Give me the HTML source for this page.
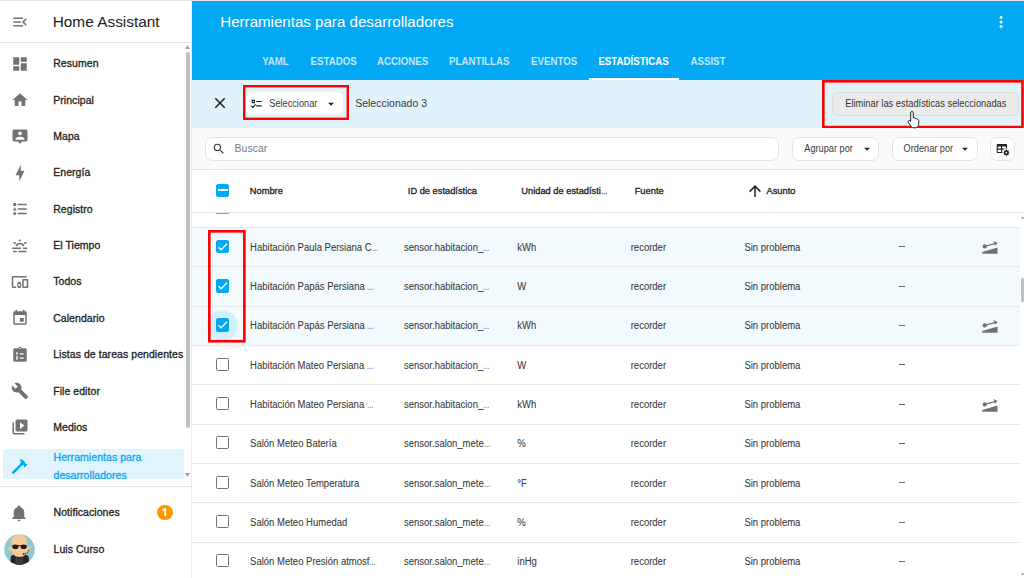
<!DOCTYPE html>
<html><head><meta charset="utf-8"><title>Home Assistant</title>
<style>
*{box-sizing:border-box;margin:0;padding:0}
html,body{width:1024px;height:578px;overflow:hidden;background:#fff;font-family:"Liberation Sans",sans-serif;color:#212121}
.a{position:absolute}
.t{position:absolute;white-space:nowrap;line-height:1}
svg{position:absolute;display:block}
.red{position:absolute;border:2.5px solid #f4000a}
.row{position:absolute;width:828px;height:39.33px;border-top:1px solid #e8e8e8}
.row.sel{background:#f3fafe}
.cb{position:absolute;width:13.2px;height:13px;border:1.6px solid #727272;border-radius:1.5px}
.cb.on{background:#03a9f4;border-color:#03a9f4;width:13.5px;height:13.5px;border-radius:2px}
</style></head><body>
<div class="a" style="left:0.00px;top:0.00px;width:1024.00px;height:1.00px;background:#dfe4e8;"></div>
<div class="a" style="left:191.00px;top:1.00px;width:1.00px;height:577.00px;background:#ececec;"></div>
<svg style="left:10.60px;top:12.60px;" width="18" height="18" viewBox="0 0 24 24"><path fill="#727272" fill-rule="evenodd" d="M21,15.61L19.59,17L14.58,12L19.59,7L21,8.39L17.44,12L21,15.61M3,6H16V8H3V6M3,13V11H13V13H3M3,18V16H16V18H3Z"/></svg>
<div class="t" style="left:52.70px;top:14.21px;font-size:15.4px;color:#212121;">Home Assistant</div>
<div class="a" style="left:0.00px;top:42.00px;width:191.00px;height:1.00px;background:#e4e4e4;"></div>
<div class="a" style="left:0;top:43px;width:184.5px;height:436px;overflow:hidden">
<svg style="left:10.80px;top:11.90px;" width="18" height="18" viewBox="0 0 24 24"><path fill="#727272" fill-rule="evenodd" d="M13,3V9H21V3M13,21H21V11H13M3,21H11V15H3M3,13H11V3H3V13Z"/></svg>
<div class="t" style="left:53.20px;top:15.37px;font-size:10.5px;color:#212121;-webkit-text-stroke:0.3px #212121;letter-spacing:0.06px;">Resumen</div>
<svg style="left:10.80px;top:48.25px;" width="18" height="18" viewBox="0 0 24 24"><path fill="#727272" fill-rule="evenodd" d="M10,20V14H14V20H19V12H22L12,3L2,12H5V20H10Z"/></svg>
<div class="t" style="left:53.20px;top:51.73px;font-size:10.5px;color:#212121;-webkit-text-stroke:0.3px #212121;letter-spacing:0.06px;">Principal</div>
<svg style="left:10.80px;top:84.60px;" width="18" height="18" viewBox="0 0 24 24"><path fill="#727272" fill-rule="evenodd" d="M4,2H20A2,2 0 0,1 22,4V16A2,2 0 0,1 20,18H15L12,21L9,18H4A2,2 0 0,1 2,16V4A2,2 0 0,1 4,2M12,4.5A2.5,2.5 0 0,0 9.5,7A2.5,2.5 0 0,0 12,9.5A2.5,2.5 0 0,0 14.5,7A2.5,2.5 0 0,0 12,4.5M6,15.5H18V14.5C18,12.5 14,11.5 12,11.5C10,11.5 6,12.5 6,14.5V15.5Z"/></svg>
<div class="t" style="left:53.20px;top:88.08px;font-size:10.5px;color:#212121;-webkit-text-stroke:0.3px #212121;letter-spacing:0.06px;">Mapa</div>
<svg style="left:10.80px;top:120.95px;" width="18" height="18" viewBox="0 0 24 24"><path fill="#727272" fill-rule="evenodd" d="M11,15H6L13,1V9H18L11,23V15Z"/></svg>
<div class="t" style="left:53.20px;top:124.43px;font-size:10.5px;color:#212121;-webkit-text-stroke:0.3px #212121;letter-spacing:0.06px;">Energía</div>
<svg style="left:10.80px;top:157.30px;" width="18" height="18" viewBox="0 0 24 24"><path fill="#727272" fill-rule="evenodd" d="M5,9.5L7.5,14H2.5L5,9.5M3,4H7V8H3V4M5,20A2,2 0 0,0 7,18A2,2 0 0,0 5,16A2,2 0 0,0 3,18A2,2 0 0,0 5,20M9,5V7H21V5H9M9,19H21V17H9V19M9,13H21V11H9V13Z"/></svg>
<div class="t" style="left:53.20px;top:160.77px;font-size:10.5px;color:#212121;-webkit-text-stroke:0.3px #212121;letter-spacing:0.06px;">Registro</div>
<svg style="left:10.80px;top:193.65px;" width="18" height="18" viewBox="0 0 24 24"><path fill="#727272" fill-rule="evenodd" d="M1.6,14.1H13.3V16.1H1.6Z M16.1,14.1H21.7V16.1H16.1Z M2.7,18.3H7.5V20.3H2.7Z M9.9,18.3H20.7V20.3H9.9Z M6.3,12.4A5.65,4.9 0 0,1 17.6,12.4H15.5A3.55,2.8 0 0,0 8.4,12.4Z M11.6,2.5L13.5,5.5H9.7Z M2.4,6.7L7.1,7.3L5.1,10.2Z M21.5,6.7L16.8,7.3L18.8,10.2Z"/></svg>
<div class="t" style="left:53.20px;top:197.12px;font-size:10.5px;color:#212121;-webkit-text-stroke:0.3px #212121;letter-spacing:0.06px;">El Tiempo</div>
<svg style="left:10.80px;top:230.00px;" width="18" height="18" viewBox="0 0 24 24"><path fill="#727272" fill-rule="evenodd" d="M3,6H21V4H3C1.9,4 1,4.9 1,6V18A2,2 0 0,0 3,20H7V18H3V6M13,12H9V13.78C8.39,14.33 8,15.11 8,16C8,16.89 8.39,17.67 9,18.22V20H13V18.22C13.61,17.67 14,16.88 14,16C14,15.12 13.61,14.33 13,13.78V12M11,17.5A1.5,1.5 0 0,1 9.5,16A1.5,1.5 0 0,1 11,14.5A1.5,1.5 0 0,1 12.5,16A1.5,1.5 0 0,1 11,17.5M22,8H16A1,1 0 0,0 15,9V19A1,1 0 0,0 16,20H22A1,1 0 0,0 23,19V9A1,1 0 0,0 22,8M21,18H17V10H21V18Z"/></svg>
<div class="t" style="left:53.20px;top:233.48px;font-size:10.5px;color:#212121;-webkit-text-stroke:0.3px #212121;letter-spacing:0.06px;">Todos</div>
<svg style="left:10.80px;top:266.35px;" width="18" height="18" viewBox="0 0 24 24"><path fill="#727272" fill-rule="evenodd" d="M19,19H5V8H19M16,1V3H8V1H6V3H5C3.89,3 3,3.89 3,5V19A2,2 0 0,0 5,21H19A2,2 0 0,0 21,19V5C21,3.89 20.1,3 19,3H18V1M17,12H12V17H17V12Z"/></svg>
<div class="t" style="left:53.20px;top:269.82px;font-size:10.5px;color:#212121;-webkit-text-stroke:0.3px #212121;letter-spacing:0.06px;">Calendario</div>
<svg style="left:10.80px;top:302.70px;" width="18" height="18" viewBox="0 0 24 24"><path fill="#727272" fill-rule="evenodd" d="M5,3H9.2A2.9,2.9 0 0,1 14.8,3H19A2,2 0 0,1 21,5V19A2,2 0 0,1 19,21H5A2,2 0 0,1 3,19V5A2,2 0 0,1 5,3Z M12,2.3A1,1 0 1,0 12,4.3A1,1 0 1,0 12,2.3Z M7,8.2H8.9V11.6H7Z M11.6,9.5H16.8V11.3H11.6Z M7,13.4H8.9V18.2H7Z M11.6,15.2H16.8V17H11.6Z"/></svg>
<div class="t" style="left:53.20px;top:306.18px;font-size:10.5px;color:#212121;-webkit-text-stroke:0.3px #212121;letter-spacing:0.06px;">Listas de tareas pendientes</div>
<svg style="left:10.80px;top:339.05px;" width="18" height="18" viewBox="0 0 24 24"><path fill="#727272" fill-rule="evenodd" d="M22.7,19L13.6,9.9C14.5,7.6 14,4.9 12.1,3C10.1,1 7.1,0.6 4.7,1.7L9,6L6,9L1.6,4.7C0.4,7.1 0.9,10.1 2.9,12.1C4.8,14 7.5,14.5 9.8,13.6L18.9,22.7C19.3,23.1 19.9,23.1 20.3,22.7L22.6,20.4C23.1,20 23.1,19.3 22.7,19Z"/></svg>
<div class="t" style="left:53.20px;top:342.53px;font-size:10.5px;color:#212121;-webkit-text-stroke:0.3px #212121;letter-spacing:0.06px;">File editor</div>
<svg style="left:10.80px;top:375.40px;" width="18" height="18" viewBox="0 0 24 24"><path fill="#727272" fill-rule="evenodd" d="M4,6H2V20A2,2 0 0,0 4,22H18V20H4V6M20,2H8A2,2 0 0,0 6,4V16A2,2 0 0,0 8,18H20A2,2 0 0,0 22,16V4A2,2 0 0,0 20,2M12,14.5V5.5L18,10L12,14.5Z"/></svg>
<div class="t" style="left:53.20px;top:378.88px;font-size:10.5px;color:#212121;-webkit-text-stroke:0.3px #212121;letter-spacing:0.06px;">Medios</div>
<div class="a" style="left:3.00px;top:405.80px;width:181.00px;height:40.00px;background:#e1f3fc;border-radius:3px"></div>
<svg style="left:10.10px;top:413.80px;" width="19" height="19" viewBox="0 0 24 24"><path fill="#03a9f4" fill-rule="evenodd" d="M2,19.63L13.43,8.2L12.72,7.5L14.14,6.07L12,3.89C13.2,2.7 15.09,2.7 16.27,3.89L19.87,7.5L18.45,8.91H21.29L22,9.62L18.45,13.21L17.74,12.5V9.62L16.27,11.04L15.56,10.33L4.13,21.76L2,19.63Z"/></svg>
<div class="t" style="left:53.50px;top:408.88px;font-size:10.5px;color:#03a9f4;-webkit-text-stroke:0.3px #03a9f4;letter-spacing:0.06px;">Herramientas para</div>
<div class="t" style="left:53.50px;top:426.68px;font-size:10.5px;color:#03a9f4;-webkit-text-stroke:0.3px #03a9f4;letter-spacing:0.06px;">desarrolladores</div>
</div>
<div class="a" style="left:185.50px;top:52.00px;width:4.70px;height:375.70px;background:#c1c1c1;border-radius:2.4px"></div>
<svg style="left:185px;top:45px" width="5" height="4" viewBox="0 0 5 4"><path fill="#a3a3a3" d="M2.5,0L5,4H0Z"/></svg>
<svg style="left:185px;top:473px" width="5" height="4" viewBox="0 0 5 4"><path fill="#a3a3a3" d="M0,0H5L2.5,4Z"/></svg>
<div class="a" style="left:0.00px;top:486.00px;width:191.00px;height:1.00px;background:#e4e4e4;"></div>
<svg style="left:10.10px;top:503.80px;" width="18" height="18" viewBox="0 0 24 24"><path fill="#727272" fill-rule="evenodd" d="M21,19V20H3V19L5,17V11C5,7.9 7.03,5.17 10,4.29C10,4.19 10,4.1 10,4A2,2 0 0,1 12,2A2,2 0 0,1 14,4C14,4.1 14,4.19 14,4.29C16.97,5.17 19,7.9 19,11V17L21,19M14,21A2,2 0 0,1 12,23A2,2 0 0,1 10,21"/></svg>
<div class="t" style="left:53.50px;top:507.07px;font-size:10.5px;color:#212121;-webkit-text-stroke:0.3px #212121;letter-spacing:0.06px;">Notificaciones</div>
<div class="a" style="left:157.30px;top:504.90px;width:15.40px;height:15.40px;background:#ff9800;border-radius:50%"></div>
<svg style="left:160px;top:506px" width="10" height="12" viewBox="160 506 10 12"><path fill="#fff" d="M164.3,508.3H166.2V516.1H164.3V510.6L162.4,511.2V509.7Z"/></svg>
<svg style="left:4px;top:533.5px" width="31" height="31" viewBox="0 0 31 31">
<defs><clipPath id="cc"><circle cx="15.5" cy="15.5" r="15.3"/></clipPath></defs>
<circle cx="15.5" cy="15.5" r="15.3" fill="#92c9cc"/>
<g clip-path="url(#cc)">
<path fill="#262626" d="M7,22L11,20H20L24.5,22L25.5,32H6Z"/>
<path fill="#3a3a3a" d="M11,21L15.5,25L20,21L19,31H12Z"/>
<ellipse cx="6.2" cy="15" rx="1.6" ry="2" fill="#f5c594"/>
<ellipse cx="24.8" cy="15" rx="1.6" ry="2" fill="#f5c594"/>
<path fill="#f7c898" d="M7.6,9C7.6,3.6 11,0.8 15.5,0.8C20,0.8 23.4,3.6 23.4,9V16C23.4,20 20,23 15.5,23C11,23 7.6,20 7.6,16Z"/>
<ellipse cx="11.4" cy="12.8" rx="3.1" ry="2.3" fill="#1c1c1c"/>
<ellipse cx="19.6" cy="12.8" rx="3.1" ry="2.3" fill="#1c1c1c"/>
<path stroke="#1c1c1c" stroke-width="0.8" d="M8,11.6H23"/>
<path stroke="#333" stroke-width="0.7" fill="none" d="M25,15.5C25,18 23,19.5 20,19.8"/>
<circle cx="19.6" cy="19.8" r="0.9" fill="#222"/>
</g></svg>
<div class="t" style="left:53.50px;top:543.58px;font-size:10.5px;color:#212121;-webkit-text-stroke:0.3px #212121;letter-spacing:0.06px;">Luis Curso</div>
<div class="a" style="left:192.00px;top:1.00px;width:832.00px;height:78.60px;background:#03a9f4;"></div>
<div class="t" style="left:220.30px;top:14.47px;font-size:15.1px;color:#fff;">Herramientas para desarrolladores</div>
<svg style="left:991.60px;top:13.00px;" width="18" height="18" viewBox="0 0 24 24"><path fill="#fff" fill-rule="evenodd" d="M12,16A2,2 0 0,1 14,18A2,2 0 0,1 12,20A2,2 0 0,1 10,18A2,2 0 0,1 12,16M12,10A2,2 0 0,1 14,12A2,2 0 0,1 12,14A2,2 0 0,1 10,12A2,2 0 0,1 12,10M12,4A2,2 0 0,1 14,6A2,2 0 0,1 12,8A2,2 0 0,1 10,6A2,2 0 0,1 12,4Z"/></svg>
<div class="t" style="left:262.20px;top:56.76px;font-size:9.7px;color:rgba(255,255,255,0.75);font-weight:700;transform:scaleY(1.16);transform-origin:0 8.24px;">YAML</div>
<div class="t" style="left:310.60px;top:56.76px;font-size:9.7px;color:rgba(255,255,255,0.75);font-weight:700;transform:scaleY(1.16);transform-origin:0 8.24px;">ESTADOS</div>
<div class="t" style="left:377.10px;top:56.76px;font-size:9.7px;color:rgba(255,255,255,0.75);font-weight:700;transform:scaleY(1.16);transform-origin:0 8.24px;">ACCIONES</div>
<div class="t" style="left:449.10px;top:56.76px;font-size:9.7px;color:rgba(255,255,255,0.75);font-weight:700;transform:scaleY(1.16);transform-origin:0 8.24px;">PLANTILLAS</div>
<div class="t" style="left:531.10px;top:56.76px;font-size:9.7px;color:rgba(255,255,255,0.75);font-weight:700;transform:scaleY(1.16);transform-origin:0 8.24px;">EVENTOS</div>
<div class="t" style="left:598.40px;top:56.76px;font-size:9.7px;color:#fff;font-weight:700;transform:scaleY(1.16);transform-origin:0 8.24px;">ESTADÍSTICAS</div>
<div class="t" style="left:690.50px;top:56.76px;font-size:9.7px;color:rgba(255,255,255,0.75);font-weight:700;transform:scaleY(1.16);transform-origin:0 8.24px;">ASSIST</div>
<div class="a" style="left:588.60px;top:77.80px;width:90.20px;height:1.80px;background:#fff;"></div>
<div class="a" style="left:192.00px;top:79.60px;width:832.00px;height:48.40px;background:#e1f2fb;"></div>
<svg style="left:210.80px;top:94.40px;" width="18" height="18" viewBox="0 0 24 24"><path fill="#212121" fill-rule="evenodd" d="M19,6.41L17.59,5L12,10.59L6.41,5L5,6.41L10.59,12L5,17.59L6.41,19L12,13.41L17.59,19L19,17.59L13.41,12L19,6.41Z"/></svg>
<div class="a" style="left:245.20px;top:91.30px;width:98.40px;height:24.20px;background:#fff;border-radius:7px;border:1px solid #eef1f3"></div>
<svg style="left:249.90px;top:96.70px;" width="13.4" height="13.4" viewBox="0 0 24 24"><path fill="#212121" fill-rule="evenodd" d="M3,5H9V11H3V5M5,7V9H7V7H5M11,7H21V9H11V7M11,15H21V17H11V15M5,20L1.5,16.5L2.91,15.09L5,17.17L9.59,12.59L11,14L5,20Z"/></svg>
<div class="t" style="left:269.30px;top:99.98px;font-size:9.2px;color:#3a3a3a;transform:scaleY(1.1);transform-origin:0 7.82px;">Seleccionar</div>
<svg style="left:324.00px;top:96.50px;" width="14" height="14" viewBox="0 0 24 24"><path fill="#212121" fill-rule="evenodd" d="M7,10L12,15L17,10H7Z"/></svg>
<div class="t" style="left:355.20px;top:97.88px;font-size:10.5px;color:#3a3a3a;transform:scaleY(1.07);transform-origin:0 8.92px;">Seleccionado 3</div>
<svg style="left:242px;top:84px" width="108.00" height="37.00" viewBox="242 84 108.00 37.00"><rect x="244.20" y="86.20" width="103.60" height="32.60" fill="none" stroke="#fd0000" stroke-width="2.4"/></svg>
<div class="a" style="left:832.40px;top:91.50px;width:186.60px;height:24.20px;background:#ebebeb;border-radius:6.5px;border:1px solid #dadada"></div>
<div class="t" style="left:845.20px;top:100.00px;font-size:9.3px;color:#333;transform:scaleY(1.12);transform-origin:0 7.91px;">Eliminar las estadísticas seleccionadas</div>
<svg style="left:821px;top:79.3px" width="203.80" height="50.40" viewBox="821 79.3 203.80 50.40"><rect x="823.30" y="81.60" width="199.20" height="45.80" fill="none" stroke="#fd0000" stroke-width="2.6"/></svg>
<div class="a" style="left:192.00px;top:128.00px;width:832.00px;height:41.00px;background:#fafafa;"></div>
<div class="a" style="left:204.50px;top:137.30px;width:574.80px;height:23.90px;background:#fff;border-radius:7px;border:1px solid #e3e3e3"></div>
<svg style="left:212.30px;top:142.40px;" width="13.7" height="13.7" viewBox="0 0 24 24"><path fill="#3c3c3c" fill-rule="evenodd" d="M9.5,3A6.5,6.5 0 0,1 16,9.5C16,11.11 15.41,12.59 14.44,13.73L14.71,14H15.5L20.5,19L19,20.5L14,15.5V14.71L13.73,14.44C12.59,15.41 11.11,16 9.5,16A6.5,6.5 0 0,1 3,9.5A6.5,6.5 0 0,1 9.5,3M9.5,5C7,5 5,7 5,9.5C5,12 7,14 9.5,14C12,14 14,12 14,9.5C14,7 12,5 9.5,5Z"/></svg>
<div class="t" style="left:234.60px;top:143.07px;font-size:10.5px;color:#7a7a7a;transform:scaleY(1.05);transform-origin:0 8.92px;">Buscar</div>
<div class="a" style="left:792.40px;top:137.30px;width:86.80px;height:23.90px;background:#fff;border-radius:7px;border:1px solid #e3e3e3"></div>
<div class="t" style="left:804.30px;top:144.78px;font-size:9.2px;color:#3a3a3a;transform:scaleY(1.1);transform-origin:0 7.82px;">Agrupar por</div>
<svg style="left:859.70px;top:141.50px;" width="14" height="14" viewBox="0 0 24 24"><path fill="#212121" fill-rule="evenodd" d="M7,10L12,15L17,10H7Z"/></svg>
<div class="a" style="left:891.70px;top:137.30px;width:85.90px;height:23.90px;background:#fff;border-radius:7px;border:1px solid #e3e3e3"></div>
<div class="t" style="left:903.60px;top:144.78px;font-size:9.2px;color:#3a3a3a;transform:scaleY(1.1);transform-origin:0 7.82px;">Ordenar por</div>
<svg style="left:958.20px;top:141.50px;" width="14" height="14" viewBox="0 0 24 24"><path fill="#212121" fill-rule="evenodd" d="M7,10L12,15L17,10H7Z"/></svg>
<div class="a" style="left:990.20px;top:137.30px;width:25.20px;height:23.90px;background:#fff;border-radius:7px;border:1px solid #e3e3e3"></div>
<svg style="left:995px;top:142px" width="15" height="15" viewBox="995 142 15 15"><path fill="#212121" fill-rule="evenodd" d="M997.7,144H1006.1A1,1 0 0,1 1007.1,145V153H997.7A1,1 0 0,1 996.7,152V145A1,1 0 0,1 997.7,144Z M997.8,146.6H1001.1V148.6H997.8Z M1002.2,146.6H1006V148.6H1002.2Z M997.8,149.7H1001.1V151.9H997.8Z M1002.2,149.7H1006V151.9H1002.2Z"/><circle cx="1006.4" cy="152.5" r="3.9" fill="#fff"/><g transform="translate(1006.4,152.3) scale(0.82)"><path fill="#212121" d="M-0.6,-3.3H0.6L0.8,-2.5L1.6,-2.1L2.3,-2.5L3.1,-1.7L2.7,-1L3,-0.2L3.5,0.1V1.2L2.7,1.4L2.4,2.1L2.8,2.8L2,3.6L1.3,3.2L0.6,3.5L0.5,4.1H-0.6L-0.8,3.4L-1.5,3.1L-2.2,3.5L-3,2.7L-2.6,2L-2.9,1.3L-3.5,1.1V0L-2.9,-0.2L-2.6,-0.9L-3,-1.6L-2.2,-2.4L-1.5,-2L-0.8,-2.4Z M0,-0.8A1.1,1.1 0 1,0 0,1.4A1.1,1.1 0 1,0 0,-0.8Z" fill-rule="evenodd"/></g></svg>
<div class="a" style="left:192.00px;top:169.00px;width:832.00px;height:1.00px;background:#e6e6e6;"></div>
<div class="a" style="left:192.00px;top:170.00px;width:832.00px;height:42.00px;background:#fff;"></div>
<div class="cb on" style="left:215.75px;top:183.75px"></div>
<div class="a" style="left:218.00px;top:189.40px;width:9.50px;height:2.00px;background:#fff;"></div>
<div class="t" style="left:249.80px;top:186.59px;font-size:9.3px;color:#212121;-webkit-text-stroke:0.3px #212121;transform:scaleY(1.04);transform-origin:0 7.91px;">Nombre</div>
<div class="t" style="left:407.80px;top:186.59px;font-size:9.3px;color:#212121;-webkit-text-stroke:0.3px #212121;transform:scaleY(1.04);transform-origin:0 7.91px;">ID de estadística</div>
<div class="t" style="left:521.30px;top:186.59px;font-size:9.3px;color:#212121;-webkit-text-stroke:0.3px #212121;transform:scaleY(1.04);transform-origin:0 7.91px;">Unidad de estadísti<span style="display:inline-block;transform:scaleX(0.68);transform-origin:0 0;opacity:0.8">…</span></div>
<div class="t" style="left:634.70px;top:186.59px;font-size:9.3px;color:#212121;-webkit-text-stroke:0.3px #212121;transform:scaleY(1.04);transform-origin:0 7.91px;">Fuente</div>
<div class="t" style="left:766.50px;top:186.59px;font-size:9.3px;color:#212121;-webkit-text-stroke:0.3px #212121;transform:scaleY(1.04);transform-origin:0 7.91px;">Asunto</div>
<svg style="left:745.50px;top:182.00px;" width="18" height="18" viewBox="0 0 24 24"><path fill="#212121" fill-rule="evenodd" d="M13,20H11V8L5.5,13.5L4.08,12.08L12,4.16L19.92,12.08L18.5,13.5L13,8V20Z"/></svg>
<div class="a" style="left:192.00px;top:212.00px;width:832.00px;height:1.00px;background:#e6e6e6;"></div>
<div class="a" style="left:192px;top:213px;width:832px;height:365px;overflow:hidden">
<div class="a" style="left:23.75px;top:0.20px;width:13.50px;height:1.10px;background:#9a9a9a;"></div>
<div class="row sel" style="left:0;top:13.90px"></div>
<div class="cb on" style="left:23.60px;top:26.75px"></div>
<svg style="left:23.60px;top:26.75px" width="13.5" height="13.5" viewBox="0 0 24 24"><path fill="none" stroke="#fff" stroke-width="2.3" d="M4.6,13L9,17.4L19.6,6.8"/></svg>
<div class="t" style="left:58.10px;top:29.63px;font-size:9.5px;color:#383838;-webkit-text-stroke:0.06px #383838;transform:scaleY(1.12);transform-origin:0 8.07px;">Habitación Paula Persiana C<span style="display:inline-block;transform:scaleX(0.68);transform-origin:0 0;opacity:0.8">…</span></div>
<div class="t" style="left:212.00px;top:29.63px;font-size:9.5px;color:#383838;-webkit-text-stroke:0.06px #383838;transform:scaleY(1.12);transform-origin:0 8.07px;">sensor.habitacion_<span style="display:inline-block;transform:scaleX(0.68);transform-origin:0 0;opacity:0.8">…</span></div>
<div class="t" style="left:325.30px;top:29.63px;font-size:9.5px;color:#383838;-webkit-text-stroke:0.06px #383838;transform:scaleY(1.12);transform-origin:0 8.07px;">kWh</div>
<div class="t" style="left:438.70px;top:29.63px;font-size:9.5px;color:#383838;-webkit-text-stroke:0.06px #383838;transform:scaleY(1.12);transform-origin:0 8.07px;">recorder</div>
<div class="t" style="left:552.40px;top:29.63px;font-size:9.5px;color:#383838;-webkit-text-stroke:0.06px #383838;transform:scaleY(1.12);transform-origin:0 8.07px;">Sin problema</div>
<div class="a" style="left:706.70px;top:33.00px;width:6.30px;height:1.00px;background:#666;"></div>
<svg style="left:790.00px;top:28.40px" width="16" height="14" viewBox="0 0 16 14"><path fill="#707070" d="M0.2,11L15.5,6.4V12.8H0.2Z"/><circle cx="2.7" cy="5.4" r="2.1" fill="#707070"/><path fill="none" stroke="#707070" stroke-width="1.3" d="M2.7,5.4L12.8,2.6"/><path fill="#707070" d="M15.7,1.9L11.5,0.1L12.9,4.7Z"/></svg>
<div class="row sel" style="left:0;top:53.23px"></div>
<div class="cb on" style="left:23.60px;top:66.08px"></div>
<svg style="left:23.60px;top:66.08px" width="13.5" height="13.5" viewBox="0 0 24 24"><path fill="none" stroke="#fff" stroke-width="2.3" d="M4.6,13L9,17.4L19.6,6.8"/></svg>
<div class="t" style="left:58.10px;top:68.96px;font-size:9.5px;color:#383838;-webkit-text-stroke:0.06px #383838;transform:scaleY(1.12);transform-origin:0 8.07px;">Habitación Papás Persiana <span style="display:inline-block;transform:scaleX(0.68);transform-origin:0 0;opacity:0.8">…</span></div>
<div class="t" style="left:212.00px;top:68.96px;font-size:9.5px;color:#383838;-webkit-text-stroke:0.06px #383838;transform:scaleY(1.12);transform-origin:0 8.07px;">sensor.habitacion_<span style="display:inline-block;transform:scaleX(0.68);transform-origin:0 0;opacity:0.8">…</span></div>
<div class="t" style="left:325.30px;top:68.96px;font-size:9.5px;color:#383838;-webkit-text-stroke:0.06px #383838;transform:scaleY(1.12);transform-origin:0 8.07px;">W</div>
<div class="t" style="left:438.70px;top:68.96px;font-size:9.5px;color:#383838;-webkit-text-stroke:0.06px #383838;transform:scaleY(1.12);transform-origin:0 8.07px;">recorder</div>
<div class="t" style="left:552.40px;top:68.96px;font-size:9.5px;color:#383838;-webkit-text-stroke:0.06px #383838;transform:scaleY(1.12);transform-origin:0 8.07px;">Sin problema</div>
<div class="a" style="left:706.70px;top:73.00px;width:6.30px;height:1.00px;background:#666;"></div>
<div class="row sel" style="left:0;top:92.56px"></div>
<div class="a" style="left:14.60px;top:96.50px;width:31.40px;height:31.40px;background:rgba(3,169,244,0.12);border-radius:50%"></div>
<div class="cb on" style="left:23.60px;top:105.41px"></div>
<svg style="left:23.60px;top:105.41px" width="13.5" height="13.5" viewBox="0 0 24 24"><path fill="none" stroke="#fff" stroke-width="2.3" d="M4.6,13L9,17.4L19.6,6.8"/></svg>
<div class="t" style="left:58.10px;top:108.29px;font-size:9.5px;color:#383838;-webkit-text-stroke:0.06px #383838;transform:scaleY(1.12);transform-origin:0 8.07px;">Habitación Papás Persiana <span style="display:inline-block;transform:scaleX(0.68);transform-origin:0 0;opacity:0.8">…</span></div>
<div class="t" style="left:212.00px;top:108.29px;font-size:9.5px;color:#383838;-webkit-text-stroke:0.06px #383838;transform:scaleY(1.12);transform-origin:0 8.07px;">sensor.habitacion_<span style="display:inline-block;transform:scaleX(0.68);transform-origin:0 0;opacity:0.8">…</span></div>
<div class="t" style="left:325.30px;top:108.29px;font-size:9.5px;color:#383838;-webkit-text-stroke:0.06px #383838;transform:scaleY(1.12);transform-origin:0 8.07px;">kWh</div>
<div class="t" style="left:438.70px;top:108.29px;font-size:9.5px;color:#383838;-webkit-text-stroke:0.06px #383838;transform:scaleY(1.12);transform-origin:0 8.07px;">recorder</div>
<div class="t" style="left:552.40px;top:108.29px;font-size:9.5px;color:#383838;-webkit-text-stroke:0.06px #383838;transform:scaleY(1.12);transform-origin:0 8.07px;">Sin problema</div>
<div class="a" style="left:706.70px;top:112.00px;width:6.30px;height:1.00px;background:#666;"></div>
<svg style="left:790.00px;top:107.06px" width="16" height="14" viewBox="0 0 16 14"><path fill="#707070" d="M0.2,11L15.5,6.4V12.8H0.2Z"/><circle cx="2.7" cy="5.4" r="2.1" fill="#707070"/><path fill="none" stroke="#707070" stroke-width="1.3" d="M2.7,5.4L12.8,2.6"/><path fill="#707070" d="M15.7,1.9L11.5,0.1L12.9,4.7Z"/></svg>
<div class="row" style="left:0;top:131.89px"></div>
<div class="cb" style="left:23.75px;top:144.74px"></div>
<div class="t" style="left:58.10px;top:147.62px;font-size:9.5px;color:#383838;-webkit-text-stroke:0.06px #383838;transform:scaleY(1.12);transform-origin:0 8.07px;">Habitación Mateo Persiana <span style="display:inline-block;transform:scaleX(0.68);transform-origin:0 0;opacity:0.8">…</span></div>
<div class="t" style="left:212.00px;top:147.62px;font-size:9.5px;color:#383838;-webkit-text-stroke:0.06px #383838;transform:scaleY(1.12);transform-origin:0 8.07px;">sensor.habitacion_<span style="display:inline-block;transform:scaleX(0.68);transform-origin:0 0;opacity:0.8">…</span></div>
<div class="t" style="left:325.30px;top:147.62px;font-size:9.5px;color:#383838;-webkit-text-stroke:0.06px #383838;transform:scaleY(1.12);transform-origin:0 8.07px;">W</div>
<div class="t" style="left:438.70px;top:147.62px;font-size:9.5px;color:#383838;-webkit-text-stroke:0.06px #383838;transform:scaleY(1.12);transform-origin:0 8.07px;">recorder</div>
<div class="t" style="left:552.40px;top:147.62px;font-size:9.5px;color:#383838;-webkit-text-stroke:0.06px #383838;transform:scaleY(1.12);transform-origin:0 8.07px;">Sin problema</div>
<div class="a" style="left:706.70px;top:151.00px;width:6.30px;height:1.00px;background:#666;"></div>
<div class="row" style="left:0;top:171.22px"></div>
<div class="cb" style="left:23.75px;top:184.07px"></div>
<div class="t" style="left:58.10px;top:186.95px;font-size:9.5px;color:#383838;-webkit-text-stroke:0.06px #383838;transform:scaleY(1.12);transform-origin:0 8.07px;">Habitación Mateo Persiana <span style="display:inline-block;transform:scaleX(0.68);transform-origin:0 0;opacity:0.8">…</span></div>
<div class="t" style="left:212.00px;top:186.95px;font-size:9.5px;color:#383838;-webkit-text-stroke:0.06px #383838;transform:scaleY(1.12);transform-origin:0 8.07px;">sensor.habitacion_<span style="display:inline-block;transform:scaleX(0.68);transform-origin:0 0;opacity:0.8">…</span></div>
<div class="t" style="left:325.30px;top:186.95px;font-size:9.5px;color:#383838;-webkit-text-stroke:0.06px #383838;transform:scaleY(1.12);transform-origin:0 8.07px;">kWh</div>
<div class="t" style="left:438.70px;top:186.95px;font-size:9.5px;color:#383838;-webkit-text-stroke:0.06px #383838;transform:scaleY(1.12);transform-origin:0 8.07px;">recorder</div>
<div class="t" style="left:552.40px;top:186.95px;font-size:9.5px;color:#383838;-webkit-text-stroke:0.06px #383838;transform:scaleY(1.12);transform-origin:0 8.07px;">Sin problema</div>
<div class="a" style="left:706.70px;top:191.00px;width:6.30px;height:1.00px;background:#666;"></div>
<svg style="left:790.00px;top:185.72px" width="16" height="14" viewBox="0 0 16 14"><path fill="#707070" d="M0.2,11L15.5,6.4V12.8H0.2Z"/><circle cx="2.7" cy="5.4" r="2.1" fill="#707070"/><path fill="none" stroke="#707070" stroke-width="1.3" d="M2.7,5.4L12.8,2.6"/><path fill="#707070" d="M15.7,1.9L11.5,0.1L12.9,4.7Z"/></svg>
<div class="row" style="left:0;top:210.55px"></div>
<div class="cb" style="left:23.75px;top:223.40px"></div>
<div class="t" style="left:58.10px;top:226.27px;font-size:9.5px;color:#383838;-webkit-text-stroke:0.06px #383838;transform:scaleY(1.12);transform-origin:0 8.07px;">Salón Meteo Batería</div>
<div class="t" style="left:212.00px;top:226.27px;font-size:9.5px;color:#383838;-webkit-text-stroke:0.06px #383838;transform:scaleY(1.12);transform-origin:0 8.07px;">sensor.salon_mete<span style="display:inline-block;transform:scaleX(0.68);transform-origin:0 0;opacity:0.8">…</span></div>
<div class="t" style="left:325.30px;top:226.27px;font-size:9.5px;color:#383838;-webkit-text-stroke:0.06px #383838;transform:scaleY(1.12);transform-origin:0 8.07px;">%</div>
<div class="t" style="left:438.70px;top:226.27px;font-size:9.5px;color:#383838;-webkit-text-stroke:0.06px #383838;transform:scaleY(1.12);transform-origin:0 8.07px;">recorder</div>
<div class="t" style="left:552.40px;top:226.27px;font-size:9.5px;color:#383838;-webkit-text-stroke:0.06px #383838;transform:scaleY(1.12);transform-origin:0 8.07px;">Sin problema</div>
<div class="a" style="left:706.70px;top:230.00px;width:6.30px;height:1.00px;background:#666;"></div>
<div class="row" style="left:0;top:249.88px"></div>
<div class="cb" style="left:23.75px;top:262.73px"></div>
<div class="t" style="left:58.10px;top:265.61px;font-size:9.5px;color:#383838;-webkit-text-stroke:0.06px #383838;transform:scaleY(1.12);transform-origin:0 8.07px;">Salón Meteo Temperatura</div>
<div class="t" style="left:212.00px;top:265.61px;font-size:9.5px;color:#383838;-webkit-text-stroke:0.06px #383838;transform:scaleY(1.12);transform-origin:0 8.07px;">sensor.salon_mete<span style="display:inline-block;transform:scaleX(0.68);transform-origin:0 0;opacity:0.8">…</span></div>
<div class="t" style="left:325.30px;top:265.61px;font-size:9.5px;color:#383838;-webkit-text-stroke:0.06px #383838;transform:scaleY(1.12);transform-origin:0 8.07px;">°F</div>
<div class="t" style="left:438.70px;top:265.61px;font-size:9.5px;color:#383838;-webkit-text-stroke:0.06px #383838;transform:scaleY(1.12);transform-origin:0 8.07px;">recorder</div>
<div class="t" style="left:552.40px;top:265.61px;font-size:9.5px;color:#383838;-webkit-text-stroke:0.06px #383838;transform:scaleY(1.12);transform-origin:0 8.07px;">Sin problema</div>
<div class="a" style="left:706.70px;top:269.00px;width:6.30px;height:1.00px;background:#666;"></div>
<div class="row" style="left:0;top:289.21px"></div>
<div class="cb" style="left:23.75px;top:302.06px"></div>
<div class="t" style="left:58.10px;top:304.94px;font-size:9.5px;color:#383838;-webkit-text-stroke:0.06px #383838;transform:scaleY(1.12);transform-origin:0 8.07px;">Salón Meteo Humedad</div>
<div class="t" style="left:212.00px;top:304.94px;font-size:9.5px;color:#383838;-webkit-text-stroke:0.06px #383838;transform:scaleY(1.12);transform-origin:0 8.07px;">sensor.salon_mete<span style="display:inline-block;transform:scaleX(0.68);transform-origin:0 0;opacity:0.8">…</span></div>
<div class="t" style="left:325.30px;top:304.94px;font-size:9.5px;color:#383838;-webkit-text-stroke:0.06px #383838;transform:scaleY(1.12);transform-origin:0 8.07px;">%</div>
<div class="t" style="left:438.70px;top:304.94px;font-size:9.5px;color:#383838;-webkit-text-stroke:0.06px #383838;transform:scaleY(1.12);transform-origin:0 8.07px;">recorder</div>
<div class="t" style="left:552.40px;top:304.94px;font-size:9.5px;color:#383838;-webkit-text-stroke:0.06px #383838;transform:scaleY(1.12);transform-origin:0 8.07px;">Sin problema</div>
<div class="a" style="left:706.70px;top:309.00px;width:6.30px;height:1.00px;background:#666;"></div>
<div class="row" style="left:0;top:328.54px"></div>
<div class="cb" style="left:23.75px;top:341.39px"></div>
<div class="t" style="left:58.10px;top:344.26px;font-size:9.5px;color:#383838;-webkit-text-stroke:0.06px #383838;transform:scaleY(1.12);transform-origin:0 8.07px;">Salón Meteo Presión atmosf<span style="display:inline-block;transform:scaleX(0.68);transform-origin:0 0;opacity:0.8">…</span></div>
<div class="t" style="left:212.00px;top:344.26px;font-size:9.5px;color:#383838;-webkit-text-stroke:0.06px #383838;transform:scaleY(1.12);transform-origin:0 8.07px;">sensor.salon_mete<span style="display:inline-block;transform:scaleX(0.68);transform-origin:0 0;opacity:0.8">…</span></div>
<div class="t" style="left:325.30px;top:344.26px;font-size:9.5px;color:#383838;-webkit-text-stroke:0.06px #383838;transform:scaleY(1.12);transform-origin:0 8.07px;">inHg</div>
<div class="t" style="left:438.70px;top:344.26px;font-size:9.5px;color:#383838;-webkit-text-stroke:0.06px #383838;transform:scaleY(1.12);transform-origin:0 8.07px;">recorder</div>
<div class="t" style="left:552.40px;top:344.26px;font-size:9.5px;color:#383838;-webkit-text-stroke:0.06px #383838;transform:scaleY(1.12);transform-origin:0 8.07px;">Sin problema</div>
<div class="a" style="left:706.70px;top:348.00px;width:6.30px;height:1.00px;background:#666;"></div>
<svg style="left:15.199999999999989px;top:16.099999999999994px" width="39.70" height="114.60" viewBox="207.2 229.1 39.70 114.60"><rect x="209.52" y="231.42" width="35.05" height="109.95" fill="none" stroke="#fd0000" stroke-width="2.65"/></svg>
<div class="a" style="left:828.00px;top:0.00px;width:4.00px;height:365.00px;background:#fff;"></div>
<svg style="left:828.5px;top:3px;position:absolute" width="3.5" height="3" viewBox="0 0 4 3"><path fill="#a3a3a3" d="M2,0L4,3H0Z"/></svg>
<div class="a" style="left:829.40px;top:65.20px;width:2.60px;height:24.20px;background:#c1c1c1;border-radius:1.3px"></div>
<svg style="left:828.5px;top:360px" width="3.5" height="3" viewBox="0 0 4 3"><path fill="#a3a3a3" d="M0,0H4L2,3Z"/></svg>
</div>
<svg style="left:905.5px;top:110px" width="18" height="19" viewBox="0 0 18 19"><path fill="#fff" stroke="#222" stroke-width="1" d="M6,1.5C6.8,1.5 7.3,2 7.3,2.8V8L8,7.8C8.7,7.6 9.3,8 9.5,8.6C10.2,8.3 10.9,8.6 11.1,9.3C11.8,9.1 12.6,9.5 12.7,10.3V14C12.7,16 11.5,17.8 9.3,17.8H7.8C6.5,17.8 5.6,17.2 4.9,16.2L2.2,12.2C1.8,11.6 2,10.9 2.6,10.6C3.1,10.3 3.7,10.5 4.1,10.9L4.7,11.6V2.8C4.7,2 5.2,1.5 6,1.5Z"/></svg>
</body></html>
